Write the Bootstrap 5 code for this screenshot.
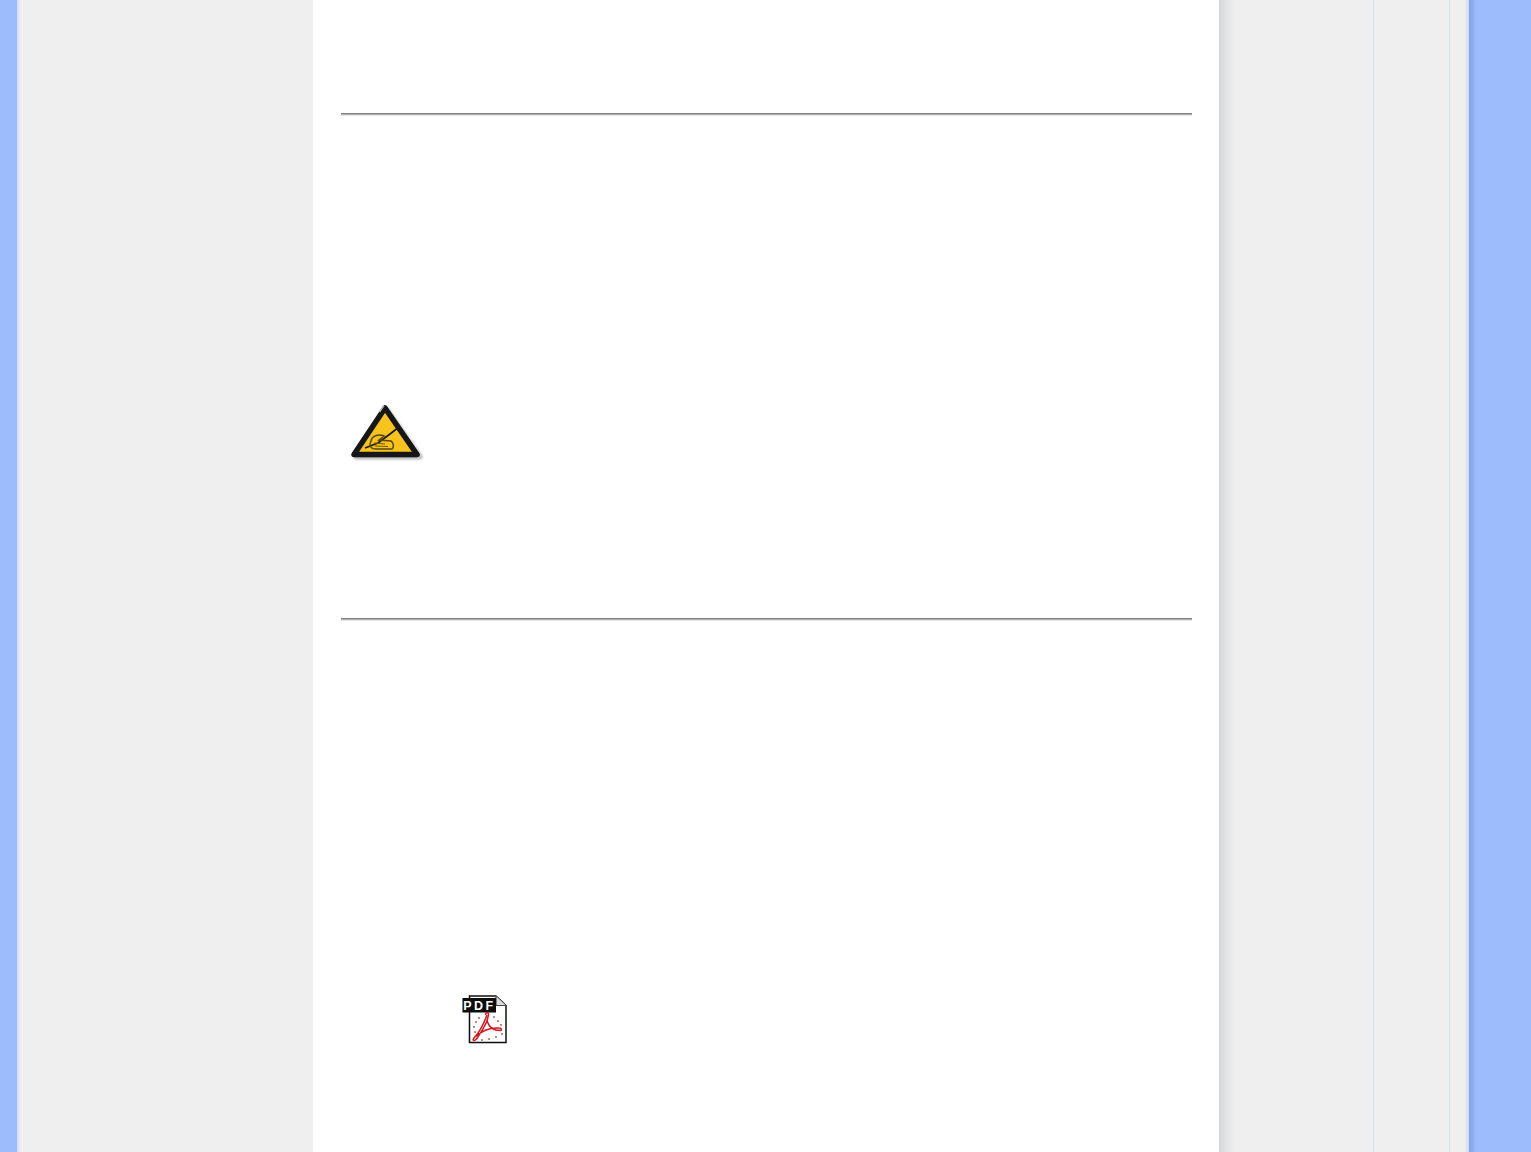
<!DOCTYPE html>
<html lang="en">
<head>
  <meta charset="UTF-8" />
  <title>User manual page</title>
  <link href="https://cdn.jsdelivr.net/npm/bootstrap@5.3.0/dist/css/bootstrap.min.css" rel="stylesheet" />
  <style>
    html, body { height: 100%; }
    body { background: #efefef; overflow: hidden; font-family: "Liberation Sans", sans-serif; }
    .page-wrap { height: 1152px; }
    .edge-left { width: 20px; background: linear-gradient(to right, #9cbcfb 0, #9cbcfb 17px, #c3d5fb 17px, #e3eafa 18px, #d5e0f8 19px, #efefef 20px); }
    .side-left { width: 293px; background: #efefef; }
    .paper { width: 906px; background: #fff; padding: 113px 27px 0 28px; }
    .shade { width: 16px; background: linear-gradient(to right, #ccd2de 0, #d8d9db 1px, #efefef 16px); }
    .side-a { width: 139px; background: #efefef; border-right: 1px solid #d3e0f7; }
    .side-b { width: 76px; background: #efefef; border-right: 1px solid #d3e0f7; }
    .side-c { width: 19px; background: linear-gradient(to right, #efefef 0, #efefef 15px, #dde2ec 17px, #ccd6ec 19px); }
    .edge-right { flex: 1; background: linear-gradient(to right, #86a6ea 0, #8aaaee 3px, #9cbcfb 7px); }
    .rule-line { height: 3px; background: linear-gradient(to bottom, #808080 0, #808080 1px, #b0b0b0 1px, #b0b0b0 2px, #e6e6e6 2px); }
    .note-row { margin-top: 287px; padding-left: 9px; height: 215px; }
    .pdf-row { margin-top: 374px; padding-left: 121px; }
    .note-icon, .pdf-icon { display: block; }
  </style>
</head>
<body>
  <div class="page-wrap d-flex">
    <div class="edge-left"></div>
    <div class="side-left"></div>

    <div class="paper">
      <div class="rule-line"></div>

      <!-- note icon -->
      <div class="note-row">
        <svg class="note-icon" width="76" height="62" viewBox="0 0 76 62">
          <defs>
            <filter id="soft"><feGaussianBlur stdDeviation="0.55" /></filter>
            <filter id="softer"><feGaussianBlur stdDeviation="1.3" /></filter>
          </defs>
          <path d="M35 5 L68 52 L4 52 Z" fill="#888" stroke="#888" stroke-width="5" stroke-linejoin="round" filter="url(#softer)" transform="translate(2 2)" opacity=".6" />
          <g filter="url(#soft)">
            <path d="M35 5 L67 51.500 L4 51.500 Z" fill="#f8c31c" stroke="#141414" stroke-width="5.500" stroke-linejoin="round" />
            <path d="M34 2.500 L29.500 9" stroke="#b5b5b5" stroke-width="1.400" fill="none" />
            <path d="M15 45 L28 40 L40 31 L49 24" fill="none" stroke="#1d1a10" stroke-width="1.700" />
            <path d="M21 38 C22 32 30 31 34 33 L29 37 L41 38 C44 40 44 45 42 46 L26 46 C20 46 19 42 21 38 Z" fill="none" stroke="#574710" stroke-width="1.600" />
            <path d="M24 40 L35 41 M25 43 L38 43.500" stroke="#6a5712" stroke-width="1.200" fill="none" />
          </g>
        </svg>
      </div>

      <div class="rule-line"></div>

      <!-- pdf icon -->
      <div class="pdf-row">
        <svg class="pdf-icon" width="47" height="50" viewBox="0 0 47 50">
          <g filter="url(#soft)">
            <path d="M7.500 1 H34 L44 10.500 V47.500 H7.500 Z" fill="#fff" stroke="#111" stroke-width="1.500" />
            <path d="M34 1 V10.500 H44" fill="#dcdcdc" stroke="#444" stroke-width="1.200" />
            <rect x="0.500" y="3" width="33.500" height="14.500" fill="#0c0c0c" />
            <path d="M25 20 C22 28 17 38 12 43 C10 45.500 12 46.500 14.500 44 C18 39 22 33 25 26 C27 32 32 35.500 38 35.500 C40 35.500 40 33 37 33 C29 32.500 20 35.500 13 42" fill="none" stroke="#d4141c" stroke-width="1.500" />
            <path d="M23.500 20 C24 16.500 26.500 16.500 26.500 20 L25 26" fill="none" stroke="#d4141c" stroke-width="1.500" />
            <g fill="#b8604f">
              <circle cx="17" cy="23" r="1" /><circle cx="14" cy="27" r="1" /><circle cx="12" cy="32" r="1" />
              <circle cx="13" cy="37" r="1" /><circle cx="32" cy="22" r="1" /><circle cx="36" cy="26" r="1" />
              <circle cx="39" cy="30" r="1" /><circle cx="40" cy="39" r="1" /><circle cx="34" cy="42" r="1" />
              <circle cx="27" cy="44" r="1" /><circle cx="20" cy="45" r="1" />
            </g>
          </g>
          <text x="17.500" y="15" text-anchor="middle" font-family="Liberation Sans, sans-serif" font-weight="700" font-size="12.500" letter-spacing="2.500" fill="#fff">PDF</text>
        </svg>
      </div>
    </div>

    <div class="shade"></div>
    <div class="side-a"></div>
    <div class="side-b"></div>
    <div class="side-c"></div>
    <div class="edge-right"></div>
  </div>

  <script src="https://cdn.jsdelivr.net/npm/bootstrap@5.3.0/dist/js/bootstrap.bundle.min.js"></script>
</body>
</html>
